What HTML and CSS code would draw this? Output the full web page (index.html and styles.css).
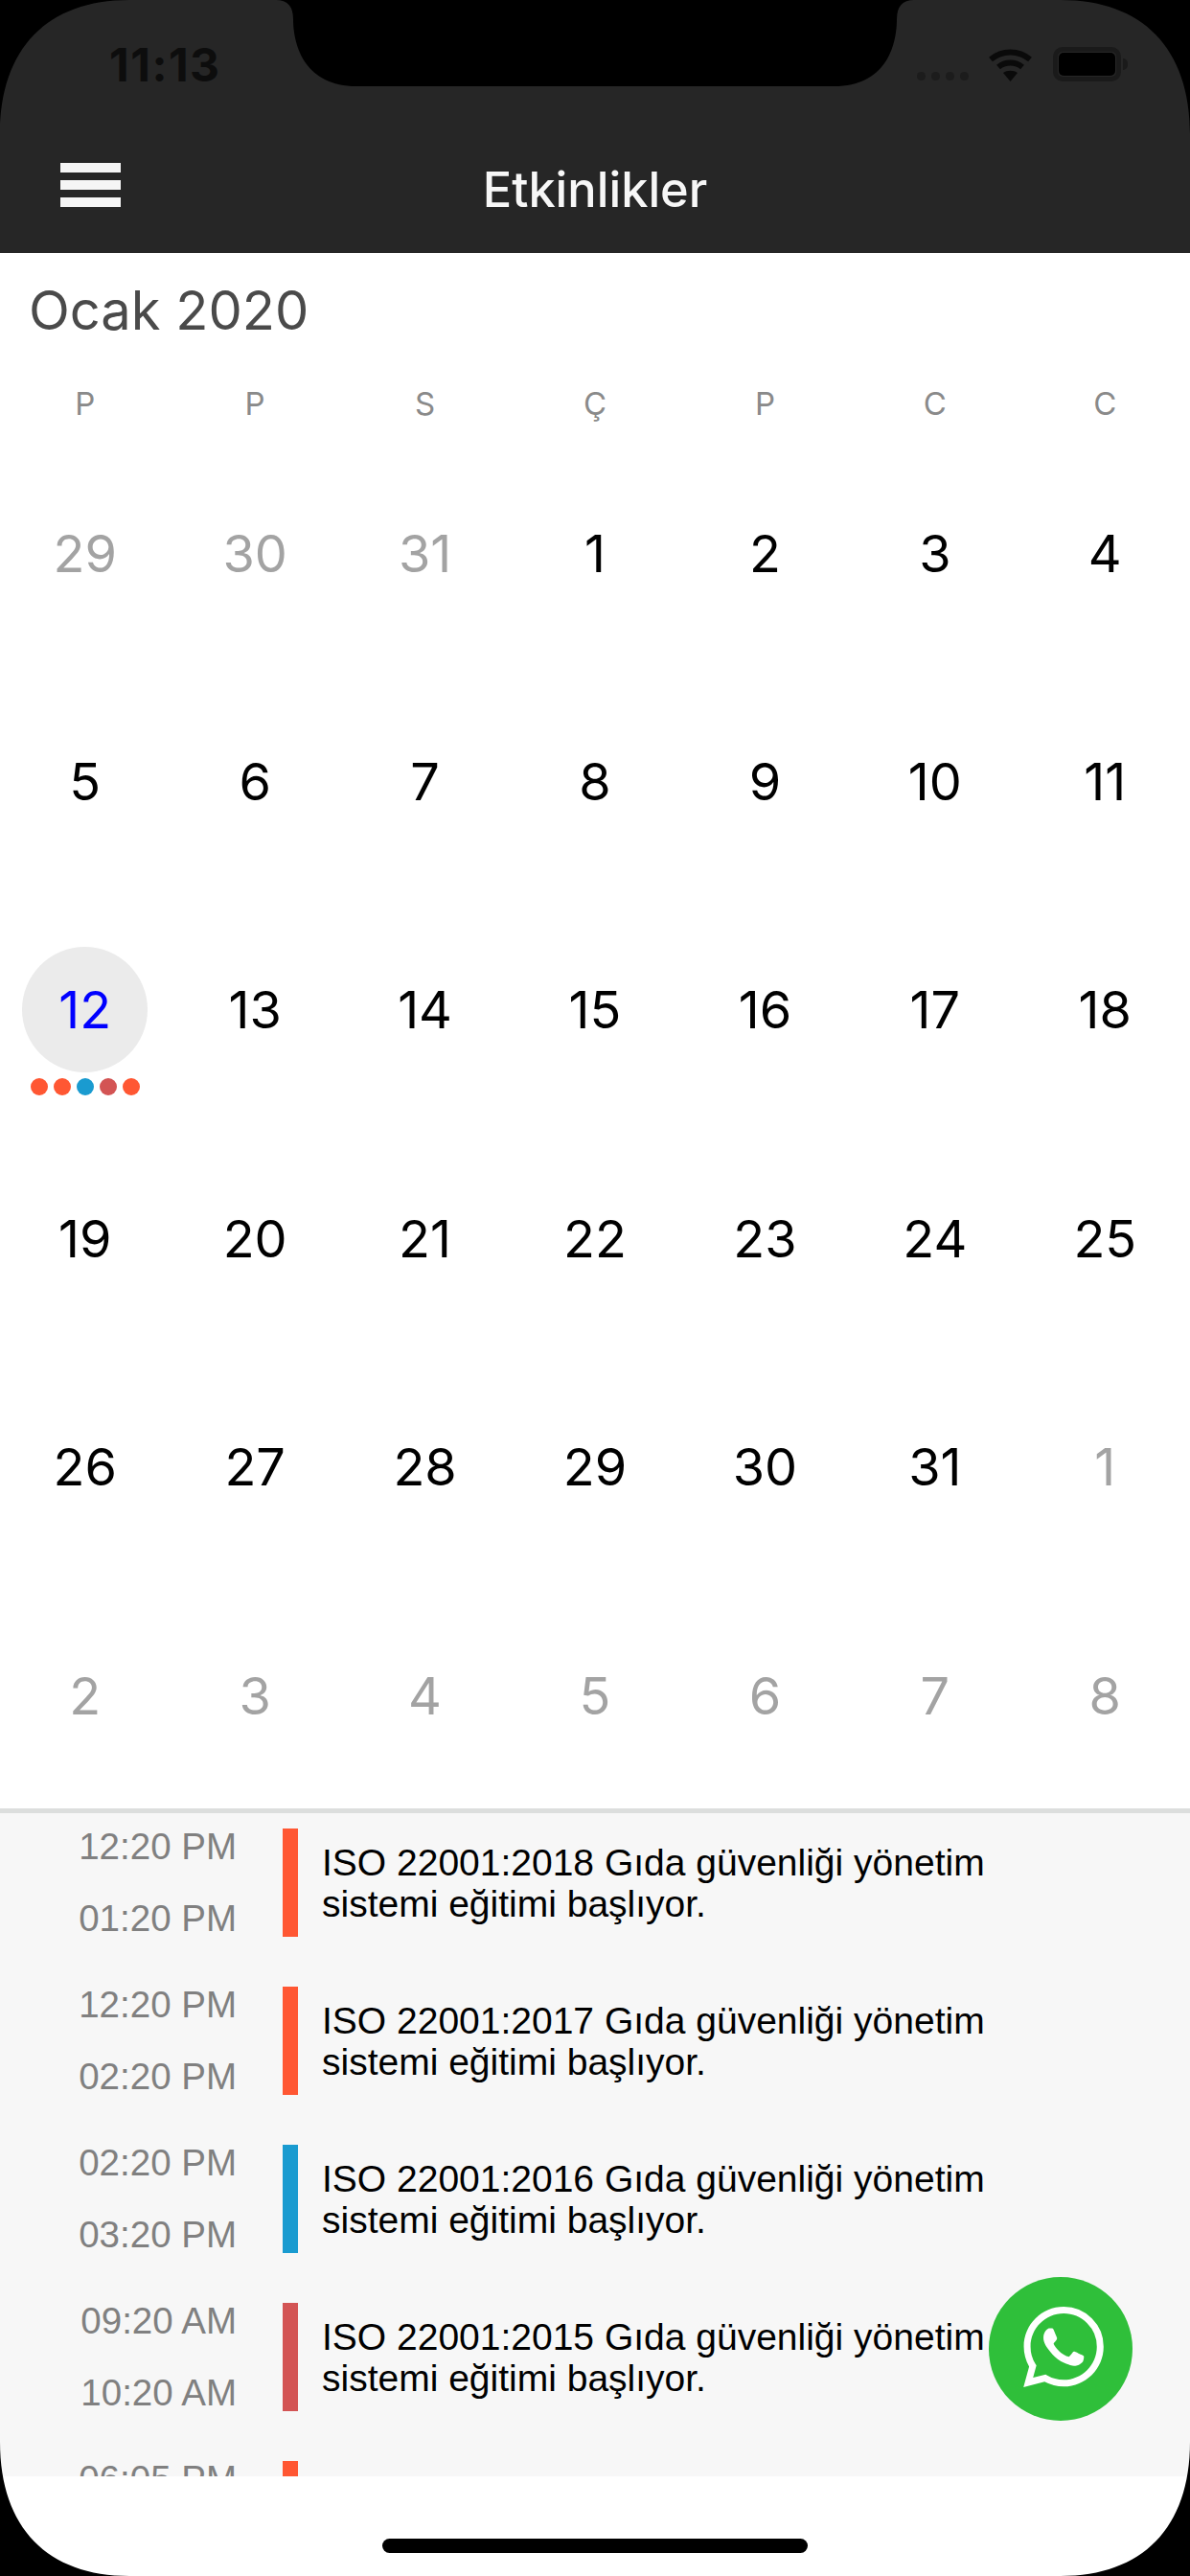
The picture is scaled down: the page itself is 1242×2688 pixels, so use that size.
FILE: index.html
```html
<!DOCTYPE html>
<html lang="tr">

<head>
    <meta charset="UTF-8" />
    <meta name="viewport" content="width=device-width, initial-scale=1.0" />
    <title>Etkinlikler</title>
    <link rel="stylesheet" href="styles.css">
</head>

<body>
    <div class="header">
        <div class="status-bar">
            <p class="clock">11:13</p>
            <div class="status-icons">
                <div class="signal">
                    <span></span><span></span><span></span><span></span>
                </div>
                <svg class="wifi" width="47" height="36" viewBox="0 0 47 36">
                    <path d="M3 13 C15 3 32 3 44 13" />
                    <path d="M11 21 C18 15 29 15 36 21" />
                    <path class="wifi-tip" d="M16 27 C20 24 27 24 31 27 L23.5 36 Z" />
                </svg>
                <div class="battery">
                    <div class="battery-fill"></div>
                </div>
                <div class="battery-nub"></div>
            </div>
        </div>
        <div class="nav-bar">
            <div class="menu">
                <span></span><span></span><span></span>
            </div>
            <p class="nav-title">Etkinlikler</p>
        </div>
    </div>

    <div class="calendar">
        <p class="month">Ocak 2020</p>
        <div class="weekdays">
            <p>P</p><p>P</p><p>S</p><p>Ç</p><p>P</p><p>C</p><p>C</p>
        </div>
        <div class="days">
            <div class="day muted">29</div>
            <div class="day muted">30</div>
            <div class="day muted">31</div>
            <div class="day">1</div>
            <div class="day">2</div>
            <div class="day">3</div>
            <div class="day">4</div>

            <div class="day">5</div>
            <div class="day">6</div>
            <div class="day">7</div>
            <div class="day">8</div>
            <div class="day">9</div>
            <div class="day">10</div>
            <div class="day">11</div>

            <div class="day today">
                <span class="today-circle">12</span>
                <div class="dots">
                    <span class="dot orange"></span>
                    <span class="dot orange"></span>
                    <span class="dot blue"></span>
                    <span class="dot red"></span>
                    <span class="dot orange"></span>
                </div>
            </div>
            <div class="day">13</div>
            <div class="day">14</div>
            <div class="day">15</div>
            <div class="day">16</div>
            <div class="day">17</div>
            <div class="day">18</div>

            <div class="day">19</div>
            <div class="day">20</div>
            <div class="day">21</div>
            <div class="day">22</div>
            <div class="day">23</div>
            <div class="day">24</div>
            <div class="day">25</div>

            <div class="day">26</div>
            <div class="day">27</div>
            <div class="day">28</div>
            <div class="day">29</div>
            <div class="day">30</div>
            <div class="day">31</div>
            <div class="day muted">1</div>

            <div class="day muted">2</div>
            <div class="day muted">3</div>
            <div class="day muted">4</div>
            <div class="day muted">5</div>
            <div class="day muted">6</div>
            <div class="day muted">7</div>
            <div class="day muted">8</div>
        </div>
    </div>

    <div class="events">
        <div class="event">
            <div class="times"><p>12:20 PM</p><p>01:20 PM</p></div>
            <div class="bar orange"></div>
            <p class="event-title">ISO 22001:2018 Gıda güvenliği yönetim sistemi eğitimi başlıyor.</p>
        </div>
        <div class="event">
            <div class="times"><p>12:20 PM</p><p>02:20 PM</p></div>
            <div class="bar orange"></div>
            <p class="event-title">ISO 22001:2017 Gıda güvenliği yönetim sistemi eğitimi başlıyor.</p>
        </div>
        <div class="event">
            <div class="times"><p>02:20 PM</p><p>03:20 PM</p></div>
            <div class="bar blue"></div>
            <p class="event-title">ISO 22001:2016 Gıda güvenliği yönetim sistemi eğitimi başlıyor.</p>
        </div>
        <div class="event">
            <div class="times"><p>09:20 AM</p><p>10:20 AM</p></div>
            <div class="bar red"></div>
            <p class="event-title">ISO 22001:2015 Gıda güvenliği yönetim sistemi eğitimi başlıyor.</p>
        </div>
        <div class="event">
            <div class="times"><p>06:05 PM</p></div>
            <div class="bar orange"></div>
        </div>
    </div>

    <div class="footer">
        <div class="home-indicator"></div>
    </div>

    <!-- floating whatsapp button -->
    <div class="whatsapp">
        <svg width="150" height="150" viewBox="0 0 150 150">
            <circle cx="75" cy="75" r="75" fill="#2fbf3a" />
            <path transform="translate(36 31) scale(3.5)" fill="#fff" d="M17.472 14.382c-.297-.149-1.758-.867-2.03-.967-.273-.099-.471-.148-.67.15-.197.297-.767.966-.94 1.164-.173.199-.347.223-.644.075-.297-.15-1.255-.463-2.39-1.475-.883-.788-1.48-1.761-1.653-2.059-.173-.297-.018-.458.13-.606.134-.133.298-.347.446-.52.149-.174.198-.298.298-.497.099-.198.05-.371-.025-.52-.075-.149-.669-1.612-.916-2.207-.242-.579-.487-.5-.669-.51-.173-.008-.371-.01-.57-.01-.198 0-.52.074-.792.372-.272.297-1.04 1.016-1.04 2.479 0 1.462 1.065 2.875 1.213 3.074.149.198 2.096 3.2 5.077 4.487.709.306 1.262.489 1.694.625.712.227 1.36.195 1.871.118.571-.085 1.758-.719 2.006-1.413.248-.694.248-1.289.173-1.413-.074-.124-.272-.198-.57-.347m-5.421 7.403h-.004a9.87 9.87 0 01-5.031-1.378l-.361-.214-3.741.982.998-3.648-.235-.374a9.86 9.86 0 01-1.51-5.26c.001-5.45 4.436-9.884 9.888-9.884 2.64 0 5.122 1.03 6.988 2.898a9.825 9.825 0 012.893 6.994c-.003 5.45-4.437 9.884-9.885 9.884m8.413-18.297A11.815 11.815 0 0012.05 0C5.495 0 .16 5.335.157 11.892c0 2.096.547 4.142 1.588 5.945L.057 24l6.305-1.654a11.882 11.882 0 005.683 1.448h.005c6.554 0 11.89-5.335 11.893-11.893a11.821 11.821 0 00-3.48-8.413z" />
        </svg>
    </div>

    <!-- phone screen corners and notch -->
    <svg class="screen-frame" width="1242" height="2688" viewBox="0 0 1242 2688">
        <path fill="#000" fill-rule="evenodd" d="M0 0 H1242 V2688 H0 Z M0 140 C0 50 50 0 135 0 L288 0 Q306 0 306 20 C306 50 320 90 372 90 L871 90 C923 90 936 50 936 20 Q936 0 954 0 L1107 0 C1192 0 1242 50 1242 140 L1242 2548 C1242 2638 1192 2688 1107 2688 L135 2688 C50 2688 0 2638 0 2548 Z" />
    </svg>
</body>

</html>
```

FILE: styles.css
```css
* {
    box-sizing: border-box;
}

body {
    margin: 0;
    width: 1242px;
    height: 2688px;
    overflow: hidden;
    position: relative;
    background: white;
    font-family: Inter, "Liberation Sans", sans-serif;
}

p {
    margin: 0;
}

.orange {
    background: #ff5733;
}

.blue {
    background: #1a9bd0;
}

.red {
    background: #d35454;
}

/* header */
.header {
    height: 264px;
    background: #262626;
}

.status-bar {
    height: 132px;
    display: flex;
    justify-content: space-between;
    padding-top: 44px;
    padding-left: 114px;
    padding-right: 65px;
}

.clock {
    font-size: 48px;
    line-height: 48px;
    font-weight: 700;
    color: #0d0d0d;
    letter-spacing: 1.5px;
}

.status-icons {
    display: flex;
    align-items: flex-start;
    padding-top: 5px;
}

.signal {
    display: flex;
    gap: 6px;
    margin-top: 26px;
    margin-right: 20px;
}

.signal span {
    width: 9px;
    height: 9px;
    border-radius: 50%;
    background: #1c1c1c;
}

.wifi {
    margin-right: 21px;
}

.wifi path {
    fill: none;
    stroke: #0a0a0a;
    stroke-width: 6;
}

.wifi .wifi-tip {
    fill: #0a0a0a;
    stroke: none;
}

.battery {
    width: 71px;
    height: 36px;
    border: 5px solid #1a1a1a;
    border-radius: 10px;
    padding: 1px;
}

.battery-fill {
    height: 100%;
    background: #000;
    border-radius: 5px;
}

.battery-nub {
    width: 5px;
    height: 12px;
    margin-top: 12px;
    margin-left: 2px;
    background: #1a1a1a;
    border-radius: 0 6px 6px 0;
}

.nav-bar {
    height: 132px;
    display: grid;
    grid-template-columns: 1fr auto 1fr;
    align-items: center;
    padding-left: 63px;
    padding-right: 63px;
}

.menu {
    width: 63px;
    display: flex;
    flex-direction: column;
    gap: 8px;
    margin-bottom: 10px;
}

.menu span {
    height: 10px;
    background: #f5f5f5;
}

.nav-title {
    color: #f7f7f7;
    font-size: 50.5px;
    font-weight: 500;
    line-height: 60px;
}

/* calendar */
.calendar {
    height: 1623px;
}

.month {
    font-size: 56px;
    line-height: 68px;
    color: #4a4a4a;
    padding-top: 26px;
    padding-left: 30px;
    height: 94px;
}

.weekdays {
    display: grid;
    grid-template-columns: repeat(7, 1fr);
    height: 100px;
    padding-top: 43px;
    text-align: center;
    font-size: 33px;
    line-height: 40px;
    color: #8a8a8a;
}

.days {
    display: grid;
    grid-template-columns: repeat(7, 1fr);
    grid-auto-rows: 238.4px;
}

.day {
    display: flex;
    align-items: center;
    justify-content: center;
    position: relative;
    font-size: 54px;
    color: #000;
}

.day.muted {
    color: #a3a3a3;
}

.today-circle {
    width: 131px;
    height: 131px;
    border-radius: 50%;
    background: #ebebeb;
    color: #0000ff;
    display: flex;
    align-items: center;
    justify-content: center;
}

.dots {
    position: absolute;
    left: 0;
    right: 0;
    top: 190px;
    display: flex;
    justify-content: center;
    gap: 6px;
}

.dot {
    width: 18px;
    height: 18px;
    border-radius: 50%;
}

/* event list */
.events {
    height: 697px;
    overflow: hidden;
    background: #f7f7f7;
    border-top: 5px solid #dcdedd;
    padding-top: 16px;
    font-family: "Liberation Sans", Arial, sans-serif;
}

.event {
    display: flex;
    align-items: center;
    height: 113px;
    margin-bottom: 52px;
}

.times {
    width: 247px;
    align-self: flex-start;
    padding-top: 1px;
    display: flex;
    flex-direction: column;
    gap: 39px;
    text-align: right;
    font-size: 38.5px;
    line-height: 36px;
    color: #808080;
}

.bar {
    width: 16px;
    height: 100%;
    margin-left: 48px;
}

.event-title {
    width: 720px;
    margin-left: 25px;
    font-size: 39px;
    line-height: 43px;
    color: #000;
}

.footer {
    height: 104px;
    padding-top: 65px;
    display: flex;
    justify-content: center;
}

.home-indicator {
    width: 444px;
    height: 15px;
    border-radius: 8px;
    background: #000;
}

.whatsapp {
    position: absolute;
    left: 1032px;
    top: 2376px;
    width: 150px;
    height: 150px;
}

.screen-frame {
    position: absolute;
    left: 0;
    top: 0;
    pointer-events: none;
}
```
